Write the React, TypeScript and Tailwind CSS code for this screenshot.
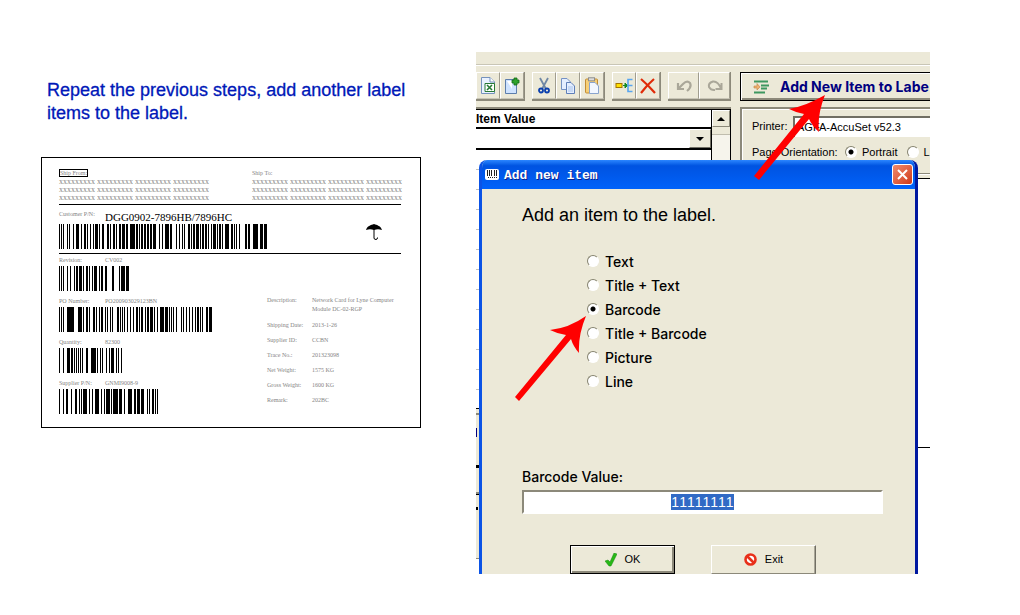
import { useEffect, useRef, useState } from 'react';
import type { ReactNode } from 'react';

// [x, width] of every bar
const BARS: Record<string, number[][]> = {
    customer: [[0, 1], [2, 1], [4, 1], [8, 1], [10, 1], [14, 1], [17, 3], [22, 1], [25, 2], [28, 1], [31, 1], [34, 1], [36, 3], [40, 1], [43, 2], [48, 2], [51, 1], [54, 2], [57, 1], [60, 2], [63, 3], [67, 2], [71, 5], [77, 2], [80, 1], [82, 2], [85, 2], [88, 2], [91, 2], [94, 3], [100, 1], [103, 1], [106, 4], [111, 2], [117, 1], [120, 1], [123, 1], [125, 1], [129, 2], [132, 1], [134, 2], [137, 3], [141, 1], [143, 2], [146, 2], [149, 1], [152, 1], [154, 3], [158, 1], [160, 2], [163, 1], [166, 4], [172, 2], [175, 1], [177, 1], [180, 1], [186, 2], [189, 2], [194, 5], [201, 3], [205, 3]],
    revision: [[0, 1], [2, 1], [4, 1], [8, 1], [11, 1], [15, 1], [17, 2], [20, 3], [24, 1], [27, 2], [30, 1], [33, 1], [35, 3], [40, 1], [42, 2], [46, 2], [53, 2], [60, 1], [62, 4], [67, 3]],
    po: [[0, 1], [2, 1], [4, 1], [8, 7], [19, 4], [24, 1], [27, 2], [30, 1], [34, 2], [37, 1], [40, 1], [42, 2], [46, 1], [48, 1], [51, 1], [53, 1], [58, 2], [61, 1], [63, 1], [65, 1], [68, 1], [71, 1], [74, 1], [77, 2], [80, 1], [82, 2], [86, 1], [88, 2], [91, 3], [95, 1], [98, 1], [101, 4], [106, 3], [110, 1], [112, 1], [114, 1], [117, 1], [122, 1], [124, 1], [127, 1], [130, 1], [133, 1], [136, 1], [138, 2], [141, 1], [143, 1], [147, 2], [150, 3]],
    quantity: [[0, 1], [4, 1], [8, 3], [12, 2], [15, 1], [17, 1], [19, 1], [21, 1], [23, 1], [27, 2], [32, 5], [38, 1], [41, 1], [43, 1], [47, 1], [50, 1], [52, 3], [57, 1], [59, 1], [62, 1]],
    supplier: [[0, 1], [4, 1], [7, 2], [12, 1], [16, 2], [20, 1], [22, 1], [24, 4], [30, 1], [33, 1], [36, 4], [42, 1], [45, 1], [47, 4], [52, 1], [54, 5], [60, 3], [65, 1], [69, 4], [75, 2], [78, 3], [82, 3], [88, 1], [90, 1], [93, 2], [96, 1], [98, 1]],
};

const CODES = [
    { bars: 'revision', title: 'Revision:', value: 'CV002' },
    { bars: 'po', title: 'PO Number:', value: 'PO200903029123BN' },
    { bars: 'quantity', title: 'Quantity:', value: '82300' },
    { bars: 'supplier', title: 'Supplier P/N:', value: 'GNMI9008-9' },
];

const DETAILS = [
    ['Shipping Date:', '2013-1-26'],
    ['Supplier ID:', 'CCBN'],
    ['Trace No.:', '201323098'],
    ['Net Weight:', '1575 KG'],
    ['Gross Weight:', '1600 KG'],
    ['Remark:', '202BC'],
];

const ITEM_TYPES = ['Text', 'Title + Text', 'Barcode', 'Title + Barcode', 'Picture', 'Line'];

const X_LINE = 'xxxxxxxxx xxxxxxxxx xxxxxxxxx xxxxxxxxx';

const RADIO = 'h-3 w-3 shrink-0 appearance-none rounded-full border border-t-[#85836f] border-l-[#85836f] border-r-white border-b-white bg-white checked:bg-[radial-gradient(circle,#000_2px,#fff_3px)]';

const Barcode = ({ name }: { name: string }) => {
    const bars = BARS[name];
    const last = bars[bars.length - 1];
    const width = last[0] + last[1];
    return (
        <svg width={width} height={25} viewBox={`0 0 ${width} 25`} shapeRendering="crispEdges" className="block">
            {bars.map(([x, w]) => <rect key={x} x={x} y={0} width={w} height={25} />)}
        </svg>
    );
};

const Address = ({ title, boxed }: { title: string; boxed?: boolean }) => (
    <div>
        <p className="flex h-2 items-center text-[6px] leading-[6px]">
            <span className={boxed ? 'border border-black' : ''}>{title}</span>
        </p>
        <div className="mt-px text-[8px] leading-2 whitespace-nowrap">
            <p>{X_LINE}</p>
            <p>{X_LINE}</p>
            <p>{X_LINE}</p>
        </div>
    </div>
);

const LabelPreview = () => (
    <section className="mt-8 border border-black bg-white px-[17px] pt-[11px] pb-[13px] font-['Liberation_Serif',serif] text-[6px] leading-2 text-[#858585]">
        <div className="mr-0.5 flex justify-between border-b border-black pb-0.5">
            <Address title="Ship From:" boxed />
            <div className="-mr-px"><Address title="Ship To:" /></div>
        </div>
        <div className="mr-0.5 flex justify-between border-b border-black pt-[5px] pb-1">
            <div>
                <div className="flex h-3.5">
                    <span className="w-[46px]">Customer P/N:</span>
                    <span className="text-[11px] leading-[14px] text-black">DGG0902-7896HB/7896HC</span>
                </div>
                <Barcode name="customer" />
            </div>
            <svg width="18" height="18" viewBox="0 0 18 18" className="mt-3.5 mr-[18px]">
                <path d="M1 6C2 2 6 1 9 0C12 1 16 2 17 6C14 5 12 5 9 6C6 5 4 5 1 6Z" />
                <path d="M9 4V14Q9 15.500 11 15.500Q12.500 15.500 12.500 13.500" fill="none" stroke="#000" />
            </svg>
        </div>
        <div className="flex justify-between">
            <div>
                {CODES.map((code, i) => (
                    <div key={code.bars} className={i === 0 ? 'pt-0.5' : 'pt-1.5'}>
                        <div className="mb-0.5 flex">
                            <span className="w-[46px]">{code.title}</span>
                            <span>{code.value}</span>
                        </div>
                        <Barcode name={code.bars} />
                    </div>
                ))}
            </div>
            <dl className="mt-[42px] grid w-[136px] grid-cols-[45px_1fr] content-start gap-y-[7px]">
                <dt>Description:</dt>
                <dd className="leading-[9px] whitespace-nowrap">Network Card for Lyne Computer<br />Module DC-02-RGP</dd>
                {DETAILS.map(([name, value]) => (
                    <div key={name} className="contents">
                        <dt className="whitespace-nowrap">{name}</dt>
                        <dd>{value}</dd>
                    </div>
                ))}
            </dl>
        </div>
    </section>
);

const Page = () => (
    <path d="M2.500 .5H11L15.500 5V16.500H2.500Z" fill="#eaf2ff" stroke="#7592bd" />
);

const icons: Record<string, ReactNode> = {
    Export: <><Page /><path d="M11 .5V5H15.500" fill="#fff" stroke="#7592bd" /><path d="M6 6.500H15.500V14.500H6Z" fill="#fff" stroke="#277a35" /><path d="M8 8L13 13M13 8L8 13" stroke="#277a35" strokeWidth="1.600" /></>,
    New: <><path d="M2.500 2.500H13.500V16.500H2.500Z" fill="#cfe3ff" stroke="#5d7eac" /><path d="M4 4H9V12Z" fill="#fff" /><path d="M11 1H14V3H16V6H14V8H11V6H9V3H11Z" fill="#2ea22b" stroke="#126a16" strokeWidth=".8" /></>,
    Cut: <><path d="M5 1L11 12M13 1L7 12" stroke="#7088a5" strokeWidth="1.800" /><circle cx="6" cy="13.500" r="2" fill="none" stroke="#0a3fae" strokeWidth="1.800" /><circle cx="12" cy="13.500" r="2" fill="none" stroke="#0a3fae" strokeWidth="1.800" /></>,
    Copy: <><path d="M2.500 1.500H8L11.500 5V12.500H2.500Z" fill="#e4eeff" stroke="#7592c5" /><path d="M7.500 5.500H12L15.500 9V16.500H7.500Z" fill="#e4eeff" stroke="#5f7fb8" /><path d="M9 10H14M9 12H14M9 14H14" stroke="#a8c3ec" /></>,
    Paste: <><rect x="2.500" y="2" width="12" height="14" rx="1" fill="#f6cf77" stroke="#c38d34" /><rect x="5.500" y=".8" width="6" height="3" fill="#ddd" stroke="#8d8d8d" /><path d="M6.500 5.500H12L15.500 9V16.500H6.500Z" fill="#f2f7ff" stroke="#8aa4cd" /></>,
    Insert: <><rect x="1" y="6.500" width="6" height="4" fill="#ffe000" stroke="#a47400" /><path d="M8 8.500H12M10 6V11L12.500 8.500Z" fill="#158a22" stroke="#158a22" /><path d="M17.500 2.500H13V14.500H17.500M13 8.500H17.500" fill="none" stroke="#58a6f0" strokeWidth="1.600" /></>,
    Delete: <path d="M2 2Q9 8 16 16M15 2Q8 8 2 16" fill="none" stroke="#e02b08" strokeWidth="2.200" />,
    Undo: <path d="M3 6V12H9M3.500 11.500L8 7Q12 3 15 6Q17 10 12 14" fill="none" stroke="#aaa799" strokeWidth="2.200" />,
    Redo: <path d="M15.500 6V12H9.500M15 11.500Q12 4 7 4.500Q2 6 3 10Q5 13.500 9 13" fill="none" stroke="#aaa799" strokeWidth="2" />,
};

const ToolGroup = ({ names, wide }: { names: string[]; wide?: boolean }) => (
    <div className="flex shrink-0 border-r border-b-2 border-[#8c897a]">
        {names.map(name => (
            <button
                key={name}
                type="button"
                aria-label={name}
                className={`flex h-[27px] items-center justify-center border border-t-white border-r-[#a09d8f] border-b-[#c8c5b6] border-l-white ${wide ? 'w-[31px]' : 'w-6'}`}
            >
                <svg width="18" height="18" viewBox="0 0 18 18" className="shrink-0">{icons[name]}</svg>
            </button>
        ))}
    </div>
);

const Toolbar = () => (
    <div className="mt-3 flex h-[43px] items-start gap-[9px] overflow-hidden border-t border-[#c9c6b6] pt-[7px] shadow-[inset_0_1px_0_#fff]">
        <div className="flex w-[255px] shrink-0 justify-between">
            <ToolGroup names={['Export', 'New']} />
            <ToolGroup names={['Cut', 'Copy', 'Paste']} />
            <ToolGroup names={['Insert', 'Delete']} />
            <ToolGroup names={['Undo', 'Redo']} wide />
        </div>
        <button
            type="button"
            className="flex h-[29px] min-w-0 flex-1 items-center overflow-hidden border border-r-0 border-black pl-3 font-['Inter',sans-serif] text-[14px] font-bold whitespace-nowrap text-[#000080] shadow-[inset_1px_1px_0_#fff,inset_0_-2px_0_#8c897a]"
        >
            <svg width="17" height="14" viewBox="0 0 17 14" className="mr-2.5 shrink-0">
                <path d="M1 1.500H15M8 5.500H16M8 8.500H14M1 12.500H12" stroke="#3e9860" strokeWidth="2" />
                <path d="M1 6H4V3.500L7 7L4 10V8H1Z" fill="#edb070" stroke="#c48345" strokeWidth=".6" />
            </svg>
            Add New Item to Labe
        </button>
    </div>
);

const ItemTable = () => (
    <div className="flex w-[255px] shrink-0 flex-col border-t-2 border-[#8c897a]">
        <div className="flex border-t border-black bg-white">
            <div className="min-w-0 flex-1">
                <h2 className="h-[17px] font-['Liberation_Sans',sans-serif] text-[12px] leading-[18px] font-bold">Item Value</h2>
                <div className="flex h-[23px] justify-end border-y-2 border-black">
                    <button type="button" aria-label="Choose value" className="flex w-[22px] items-center justify-center border border-t-white border-r-[#716f64] border-b-[#716f64] border-l-white bg-[#ece9d8]">
                        <svg width="8" height="4" viewBox="0 0 8 4"><path d="M0 0H8L4 4Z" /></svg>
                    </button>
                </div>
                {Array.from({ length: 12 }).map((_, i) => (
                    <div key={i} className="h-5 border-b border-[#c0c0c0]" />
                ))}
                <div className="h-[19px] border-b border-black" />
            </div>
            <div className="w-[20px] border-x border-black bg-[#f6f4ec]">
                <div className="flex h-[17px] items-center justify-center border border-t-white border-r-[#8c897a] border-b-[#8c897a] border-l-white bg-[#ece9d8]">
                    <svg width="8" height="4" viewBox="0 0 8 4"><path d="M0 4H8L4 0Z" /></svg>
                </div>
                <div className="h-2 border-b border-[#c0bdae] bg-[#ece9d8]" />
            </div>
        </div>
        <div className="mt-1 h-[146px] border-y border-t-2 border-[#8c897a] pt-[13px]">
            <div className="h-[9px] w-px bg-[#000080]" />
            <div className="mt-7 h-[3px] w-[3px] bg-black" />
            <div className="mt-6 h-[3px] w-[3px] border-b border-black bg-[#8c897a]" />
            <div className="mt-3 h-[3px] w-0.5 bg-black" />
        </div>
        <div className="flex-1 bg-white" />
    </div>
);

const PrinterSettings = () => (
    <div className="flex min-w-0 flex-1 flex-col overflow-hidden">
        <div className="h-[67px] shrink-0 border-t-2 border-b border-l-2 border-[#8c897a] pt-[7px] pl-2.5 font-['Liberation_Sans',sans-serif] text-[11px] whitespace-nowrap shadow-[inset_1px_1px_0_#fff]">
            <div className="flex items-center">
                <label htmlFor="printer" className="w-[41px] shrink-0">Printer:</label>
                <select id="printer" className="h-[21px] min-w-0 flex-1 appearance-none border-t-2 border-l-2 border-[#716f64] bg-white pl-0.5">
                    <option>AGFA-AccuSet v52.3</option>
                </select>
            </div>
            <fieldset className="mt-[7px] flex items-center">
                <legend className="float-left w-[93px]">Page Orientation:</legend>
                <label className="flex items-center gap-[5px]">
                    <input type="radio" name="orientation" defaultChecked className={RADIO} />
                    Portrait
                </label>
                <label className="ml-2.5 flex items-center gap-1">
                    <input type="radio" name="orientation" className={RADIO} />
                    L
                </label>
            </fieldset>
        </div>
        <div className="h-1 shrink-0 border-t border-white" />
        <div className="h-[270px] shrink-0 border-y border-black bg-white" />
        <div className="flex-1 bg-white" />
    </div>
);

const AddItemDialog = () => {
    const [tipo, setTipo] = useState('Barcode');
    const [value, setValue] = useState('11111111');
    const inputRef = useRef<HTMLInputElement>(null);

    useEffect(() => {
        inputRef.current?.focus();
        inputRef.current?.select();
    }, []);

    return (
        <div
            role="dialog"
            aria-labelledby="dialog-title"
            className="absolute top-[108px] right-3 bottom-0 left-[3px] overflow-hidden rounded-t-lg border-x-3 border-l-[#0b53e6] border-r-[#0018a0] bg-[#ece9d8] font-['Inter',sans-serif]"
        >
            {/* Title bar */}
            <div className="flex h-[29px] items-center bg-linear-to-b from-[#2b86ff] via-[#0053e1] via-20% to-[#0062fa] pr-0.5 pl-[3px]">
                <svg width="14" height="11" viewBox="0 0 14 11" className="mr-[5px]">
                    <rect width="14" height="11" rx="2" fill="#fff" />
                    <path d="M2.500 1V7M4.500 1V7M6.500 1V7M9.500 1V7M11.500 1V7" stroke="#222" />
                    <path d="M3 8.500H12" stroke="#222" strokeDasharray="1 1" />
                </svg>
                <h1 id="dialog-title" className="flex-1 pt-0.5 font-['Liberation_Mono',monospace] text-[13px] font-bold text-white [text-shadow:1px_1px_0_#0a1f8c]">Add new item</h1>
                <button type="button" aria-label="Close" className="flex h-[21px] w-[21px] items-center justify-center rounded-[3px] border border-white bg-linear-to-br from-[#f08a6c] to-[#cf3511]">
                    <svg width="11" height="11" viewBox="0 0 11 11"><path d="M1 1L10 10M10 1L1 10" stroke="#fff" strokeWidth="2" /></svg>
                </button>
            </div>

            <div className="pt-3.5 pr-8 pl-10 text-[14px] font-medium">
                <p className="font-['Liberation_Sans',sans-serif] text-[18px] leading-6 font-normal">Add an item to the label.</p>

                <div className="mt-[22px] ml-[65px]">
                    {ITEM_TYPES.map(item => (
                        <label key={item} className="flex h-6 items-center gap-1.5">
                            <input type="radio" name="item-type" checked={tipo === item} onChange={() => setTipo(item)} className={RADIO} />
                            {item}
                        </label>
                    ))}
                </div>

                <label htmlFor="barcode-value" className="mt-[74px] block leading-5">Barcode Value:</label>
                <input
                    id="barcode-value"
                    ref={inputRef}
                    value={value}
                    onChange={e => setValue(e.target.value)}
                    className="mt-[3px] block h-6 w-full border-2 border-t-[#8c897a] border-r-white border-b-white border-l-[#8c897a] bg-white text-center font-['Liberation_Sans',sans-serif] text-[14px] font-normal outline-none [font-kerning:none] selection:bg-[#316ac5] selection:text-white"
                />

                <div className="mt-[31px] flex gap-9 pl-12 font-['Liberation_Sans',sans-serif] text-[11px] font-normal">
                    <button type="button" className="flex h-[29px] w-[105px] items-center justify-center gap-2 border border-black shadow-[inset_1px_1px_0_#fff,inset_-2px_-2px_0_#8c897a]">
                        <svg width="12" height="14" viewBox="0 0 12 14"><path d="M0 8L3 7L5 9L9 0L12 1L6 13H4Z" fill="#27b816" stroke="#178a10" strokeWidth=".5" /></svg>
                        OK
                    </button>
                    <button type="button" className="flex h-[29px] w-[105px] items-center justify-center gap-2 border border-t-white border-r-[#716f64] border-b-[#8c897a] border-l-white shadow-[inset_-1px_0_0_#a9a698]">
                        <svg width="13" height="13" viewBox="0 0 13 13"><circle cx="6.500" cy="6.500" r="5" fill="#fff" stroke="#e8301a" strokeWidth="2.600" /><path d="M3 3L10 10" stroke="#e8301a" strokeWidth="2.600" /></svg>
                        Exit
                    </button>
                </div>
            </div>
        </div>
    );
};

const App = () => (
    <main className="grid grid-cols-[380fr_454fr] items-start gap-[55px] bg-white pt-[52px] pr-[90px] pb-10 pl-[41px] text-black">
        <div className="pt-[27px]">
            <p className="pl-1.5 font-['Liberation_Sans',sans-serif] text-[18px] leading-[23px] text-[#0018b8] [-webkit-text-stroke:0.3px_#0018b8]">
                Repeat the previous steps, add another label items to the label.
            </p>
            <LabelPreview />
        </div>

        <div className="relative flex h-[522px] flex-col overflow-hidden bg-[#ece9d8]">
            <Toolbar />
            <div className="flex min-h-0 flex-1 gap-[9px]">
                <ItemTable />
                <PrinterSettings />
            </div>
            <AddItemDialog />

            {/* Red arrows */}
            <svg width="72" height="86" viewBox="754 95 72 86" className="absolute top-[43px] left-[278px]">
                <path d="M825 95Q806 106 789 109Q797 113 804 114L754 176L759 180L809 119Q812 126 819 132Q817 115 825 95Z" fill="#f00" />
            </svg>
            <svg width="72" height="86" viewBox="515 316 72 86" className="absolute top-[264px] left-[39px]">
                <path d="M586 316Q569 328 550 330Q558 334 566 335L515 397L519 401L571 339Q573 346 579 353Q578 335 586 316Z" fill="#f00" />
            </svg>
        </div>
    </main>
);

export default App;
